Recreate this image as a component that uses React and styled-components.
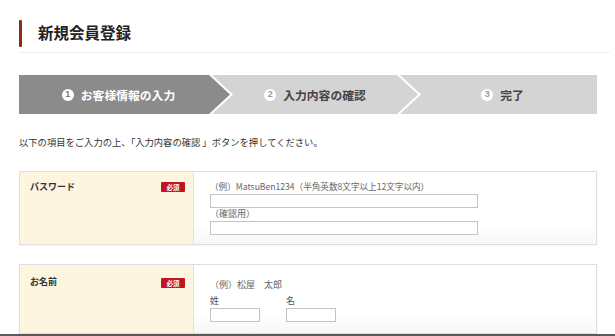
import React from "react";
import styled, { createGlobalStyle } from "styled-components";

const Global = createGlobalStyle`
  html, body { margin: 0; padding: 0; background: #fff; }
  body { font-family: "Noto Sans CJK JP", "Noto Sans", sans-serif; color: #333; overflow: hidden; }
  * { box-sizing: border-box; }
`;

const Page = styled.div`
  width: 615px;
  padding: 20px 0 0 19px;
`;

const Main = styled.div`
  width: 578px;
`;

const Header = styled.div`
  display: flex;
  align-items: flex-start;
  gap: 16px;
  width: 591px;
  height: 33px;
  border-bottom: 1px solid #f0f0f0;
  margin-bottom: 22px;
`;

const Bar = styled.span`
  width: 3px;
  height: 27px;
  background: #8a2b17;
  border-radius: 1px;
`;

const Title = styled.h1`
  margin: 5px 0 0;
  font-size: 15.5px;
  font-weight: 700;
  color: #222;
  line-height: 1;
`;

const Steps = styled.div`
  display: flex;
  width: 578px;
  height: 39px;
`;

const D = 21;
const G = 3;

const Step = styled.div`
  display: flex;
  flex: none;
  align-items: center;
  justify-content: center;
  gap: 7px;
  width: ${(p) => p.$w}px;
  margin-left: ${(p) => (p.$first ? 0 : -(D - G))}px;
  padding-left: ${(p) => p.$pl || 0}px;
  padding-right: ${(p) => p.$pr || 0}px;
  background: ${(p) => (p.$active ? "#8b8b8b" : "#d4d4d4")};
  color: ${(p) => (p.$active ? "#fff" : "#444")};
  font-size: 11.8px;
  font-weight: 700;
  clip-path: ${(p) =>
    p.$first
      ? `polygon(0 0, calc(100% - ${D}px) 0, 100% 50%, calc(100% - ${D}px) 100%, 0 100%)`
      : p.$last
      ? `polygon(0 0, 100% 0, 100% 100%, 0 100%, ${D}px 50%)`
      : `polygon(0 0, calc(100% - ${D}px) 0, 100% 50%, calc(100% - ${D}px) 100%, 0 100%, ${D}px 50%)`};
`;

const Num = styled.span`
  display: inline-flex;
  align-items: center;
  justify-content: center;
  width: 12px;
  height: 12px;
  border-radius: 50%;
  background: #fff;
  color: ${(p) => (p.$active ? "#7a7a7a" : "#999")};
  font-family: "Liberation Sans", sans-serif;
  font-size: 9px;
  font-weight: 700;
  line-height: 1;
`;

const Intro = styled.p`
  margin: 22px 0 22px;
  font-size: 9.3px;
  line-height: 13px;
  color: #333;
  white-space: nowrap;
`;

const Row = styled.div`
  display: flex;
  width: 578px;
  border: 1px solid #dedede;
  box-shadow: 0 1px 2px rgba(0, 0, 0, 0.04);
  margin-bottom: 19px;
  height: ${(p) => p.$h}px;
`;

const LabelCell = styled.div`
  width: 174px;
  flex: none;
  display: flex;
  justify-content: space-between;
  align-items: flex-start;
  padding: ${(p) => p.$pt}px 8px 0 10px;
  background: #fdf5df;
  border-right: 1px solid #e6e2d6;
`;

const Label = styled.span`
  font-size: 9px;
  font-weight: 700;
  line-height: 13px;
  color: #333;
`;

const Badge = styled.span`
  display: inline-flex;
  align-items: center;
  justify-content: center;
  width: 24px;
  height: 10px;
  margin-top: ${(p) => p.$mt || 1}px;
  background: #c4141c;
  color: #fff;
  font-size: 6.5px;
  font-weight: 700;
  border-radius: 1px;
`;

const FieldCell = styled.div`
  flex: 1;
  min-width: 0;
  display: flex;
  flex-direction: column;
  padding: ${(p) => p.$pt}px 16px 0 16px;
  background: linear-gradient(#fff 70%, #f7f7f7);
`;

const Hint = styled.span`
  font-size: ${(p) => p.$fs || 9}px;
  line-height: 12px;
  color: #666;
  margin-bottom: ${(p) => p.$mb || 0}px;
  white-space: nowrap;
`;

const Input = styled.input`
  display: block;
  width: ${(p) => p.$w}px;
  height: 14px;
  margin: 0;
  padding: 0;
  border: 1px solid #c4c4c4;
  background: #fff;
`;

const NameFields = styled.div`
  display: flex;
  gap: 26px;
`;

const NameField = styled.label`
  display: flex;
  flex-direction: column;
  gap: 2px;
  font-size: 9px;
  line-height: 11px;
  color: #555;
`;

const BottomEdge = styled.div`
  position: fixed;
  left: 0;
  right: 0;
  bottom: 0;
  height: 2px;
  background: #5a5a5a;
`;

export default function App() {
  return (
    <>
      <Global />
      <Page>
        <Header>
          <Bar />
          <Title>新規会員登録</Title>
        </Header>
        <Main>
          <Steps>
            <Step $first $active $w={211} $pr={12}>
              <Num $active>1</Num>お客様情報の入力
            </Step>
            <Step $w={206}>
              <Num>2</Num>入力内容の確認
            </Step>
            <Step $last $w={197} $pl={8}>
              <Num>3</Num>完了
            </Step>
          </Steps>
          <Intro>以下の項目をご入力の上、「入力内容の確認 」ボタンを押してください。</Intro>
          <Row $h={74}>
            <LabelCell $pt={8}>
              <Label>パスワード</Label>
              <Badge $mt={2}>必須</Badge>
            </LabelCell>
            <FieldCell $pt={8}>
              <Hint $mb={2} $fs={8.6}>（例）MatsuBen1234（半角英数8文字以上12文字以内）</Hint>
              <Input type="password" $w={268} />
              <Hint $mb={1}>（確認用）</Hint>
              <Input type="password" $w={268} />
            </FieldCell>
          </Row>
          <Row $h={70}>
            <LabelCell $pt={10}>
              <Label>お名前</Label>
              <Badge $mt={3}>必須</Badge>
            </LabelCell>
            <FieldCell $pt={14}>
              <Hint $mb={4}>（例）松屋　太郎</Hint>
              <NameFields>
                <NameField>
                  姓
                  <Input type="text" $w={50} />
                </NameField>
                <NameField>
                  名
                  <Input type="text" $w={50} />
                </NameField>
              </NameFields>
            </FieldCell>
          </Row>
          <Row $h={40}>
            <LabelCell $pt={10} />
            <FieldCell $pt={10} />
          </Row>
        </Main>
      </Page>
      <BottomEdge />
    </>
  );
}
